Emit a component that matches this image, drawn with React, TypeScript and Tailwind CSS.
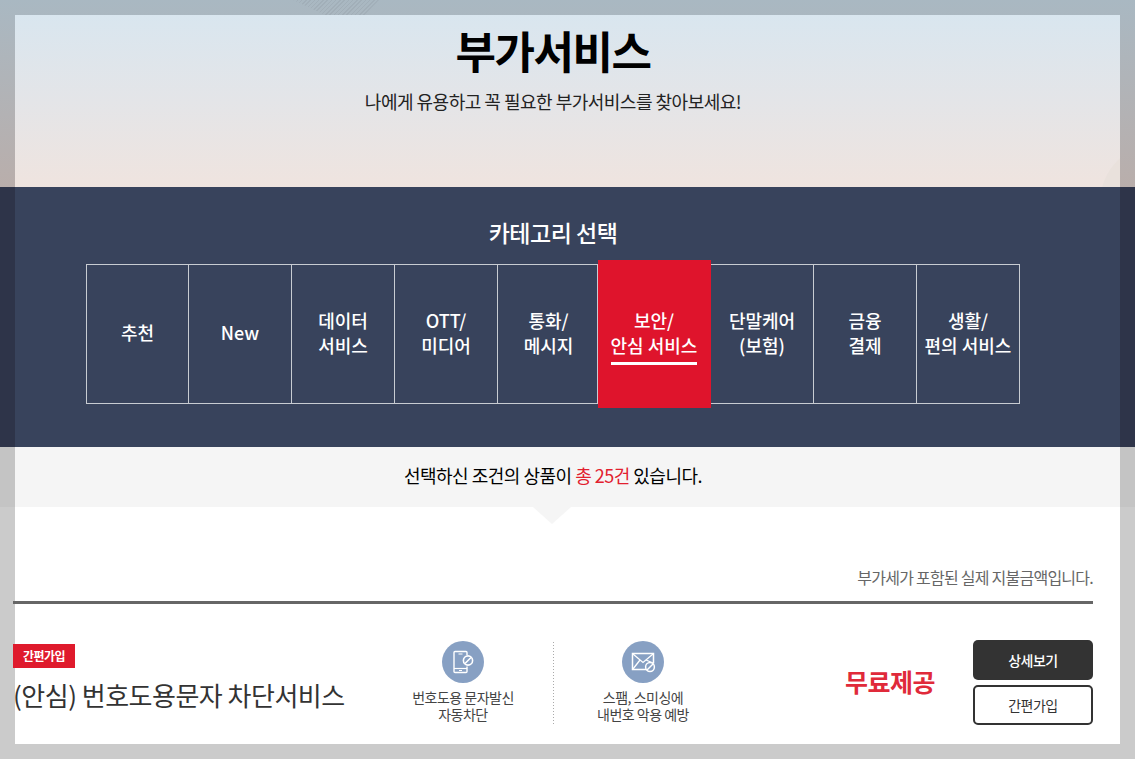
const font = { fontFamily: '"Noto Sans CJK KR", "Noto Sans", sans-serif' };

function PhoneBlock() {
  return (
    <svg width="42" height="42" viewBox="0 0 42 42" fill="none">
      <circle cx="21" cy="21" r="21" fill="#87a0c3" />
      <path d="M25 14V11.500a1 1 0 0 0-1-1H13a1 1 0 0 0-1 1v19a1 1 0 0 0 1 1h11a1 1 0 0 0 1-1v-5" stroke="#fff" strokeWidth="1.4" />
      <path d="M12 27.500h13" stroke="#fff" strokeWidth="1.2" />
      <path d="M16.500 13h4M17 29.500h3" stroke="#fff" strokeWidth="1.1" />
      <circle cx="26" cy="19.500" r="4.600" stroke="#fff" strokeWidth="1.600" />
      <path d="M23 22.500l6-6" stroke="#fff" strokeWidth="1.600" />
    </svg>
  );
}

function MailBlock() {
  return (
    <svg width="42" height="42" viewBox="0 0 42 42" fill="none">
      <circle cx="21" cy="21" r="21" fill="#87a0c3" />
      <path d="M24 28.500H10.500V12.500h21v10" stroke="#fff" strokeWidth="1.500" />
      <path d="M11 13l10 8.500L31 13M11 28l7-9M31 22l-7-3" stroke="#fff" strokeWidth="1.300" />
      <circle cx="28" cy="26" r="4.400" fill="#87a0c3" stroke="#fff" strokeWidth="1.500" />
      <path d="M25 29l6-6" stroke="#fff" strokeWidth="1.400" />
    </svg>
  );
}

const cats: [string, string?][] = [
  ['추천'],
  ['New'],
  ['데이터', '서비스'],
  ['OTT/', '미디어'],
  ['통화/', '메시지'],
  ['보안/', '안심 서비스'],
  ['단말케어', '(보험)'],
  ['금융', '결제'],
  ['생활/', '편의 서비스'],
];

export default function App() {
  return (
    <div style={font} className="relative h-[759px] w-full overflow-hidden bg-[#cbcbcb] tracking-[-0.5px]">
      {/* Hero */}
      <div className="relative bg-gradient-to-b from-[#a9b8c2] to-[#b9aeab] px-[15px] pt-[15px]">
        <div
          className="absolute left-[293px] top-0 h-[16px] w-[86px] opacity-30"
          style={{
            backgroundImage: 'repeating-linear-gradient(135deg, #8f9aa3 0 1px, transparent 1px 3px)',
            clipPath: 'polygon(0 0, 100% 0, 82% 100%, 40% 100%)',
          }}
        />
        <div className="relative h-[172px] overflow-hidden bg-gradient-to-b from-[#d9e6ef] via-[#e4e5e8] to-[#efe4df] pr-[29px] pt-[7px] text-center">
          <div className="absolute left-[1085px] top-[128px] h-[120px] w-[120px] rounded-full bg-[#e9e1dc]" />
          <h1 className="relative text-[44px] font-bold leading-[56px] tracking-[-1.500px] text-black">부가서비스</h1>
          <p className="relative mt-[10px] text-[18px] leading-[26px] text-[#222]">나에게 유용하고 꼭 필요한 부가서비스를 찾아보세요!</p>
        </div>
      </div>

      {/* Category band */}
      <div className="bg-[#2e3449] px-[15px]">
        <div className="h-[260px] bg-[#38435c] pt-[28px]">
          <h2 className="pr-[29px] text-center text-[23px] font-medium leading-[34px] text-white">카테고리 선택</h2>
          <div className="ml-[71px] mt-[15px] grid h-[140px] w-[934px] grid-cols-[102px_103px_103px_103px_100px_113px_103px_103px_103px] border-b border-l border-t border-[#c8ccd2]">
            {cats.map((c, i) => (
              <div key={i} className={`relative flex flex-col items-center justify-center border-r border-[#c8ccd2] pb-[4px] text-center text-[18px] font-medium leading-[24px] tracking-normal text-white ${i === 4 ? 'pl-[2px]' : ''}`}>
                {i === 5 && <div className="absolute -bottom-[5px] -right-px -top-[5px] left-0 bg-[#df142c]" />}
                <span className="relative">{c[0]}</span>
                {c[1] && <span className={i === 5 ? 'relative -mb-[9px] mt-px border-b-[3px] border-white pb-[5px]' : 'relative mt-px'}>{c[1]}</span>}
              </div>
            ))}
          </div>
        </div>
      </div>

      {/* Result count */}
      <div className="bg-[#c4c4c4] px-[15px]">
        <div className="relative h-[60px] bg-[#f5f5f5] pr-[29px] text-center text-[18px] leading-[56px] text-black">
          선택하신 조건의 상품이 <span className="text-[#e2202f]">총 25건</span> 있습니다.
        </div>
      </div>

      {/* List */}
      <div className="px-[15px]">
        <div className="relative h-[237px] bg-white">
          <div className="absolute left-[518px] top-0 h-0 w-0 border-x-[19px] border-t-[17px] border-x-transparent border-t-[#f5f5f5]" />
          <div className="ml-[-2px] w-[1080px] pt-[58px]">
            <p className="text-right text-[16px] leading-[24px] tracking-[-0.750px] text-[#666]">부가세가 포함된 실제 지불금액입니다.</p>
            <div className="mt-[12px] h-[3px] bg-[#666]" />
            <div className="mt-[36px] flex h-[90px] items-start">
              <div className="w-[360px] pt-[4px]">
                <span className="block h-[24px] w-[62px] bg-[#df1a2c] text-center text-[12px] font-bold leading-[23px] text-white">간편가입</span>
                <p className="mt-[9px] text-[26px] leading-[36px] text-[#333]">(안심) 번호도용문자 차단서비스</p>
              </div>
              <div className="flex w-[180px] flex-col items-center pt-px">
                <PhoneBlock />
                <p className="mt-[6px] text-center text-[14px] leading-[17px] text-[#444]">번호도용 문자발신<br />자동차단</p>
              </div>
              <div className="mt-[2px] h-[82px] w-px bg-[linear-gradient(#aaa_50%,transparent_50%)] bg-[length:1px_3px]" />
              <div className="flex w-[178px] flex-col items-center pt-px">
                <MailBlock />
                <p className="mt-[6px] text-center text-[14px] leading-[17px] text-[#444]">스팸, 스미싱에<br />내번호 악용 예방</p>
              </div>
              <div className="w-[241px] pl-[113px] pt-[22px] text-[25px] font-bold leading-[38px] text-[#e02a3a]">무료제공</div>
              <div className="flex w-[120px] flex-col gap-[5px]">
                <button className="h-[40px] rounded-[5px] bg-[#333] text-[14px] font-medium text-white">상세보기</button>
                <button className="h-[40px] rounded-[5px] border-2 border-[#333] bg-white text-[14px] text-[#333]">간편가입</button>
              </div>
            </div>
          </div>
        </div>
      </div>
    </div>
  );
}
